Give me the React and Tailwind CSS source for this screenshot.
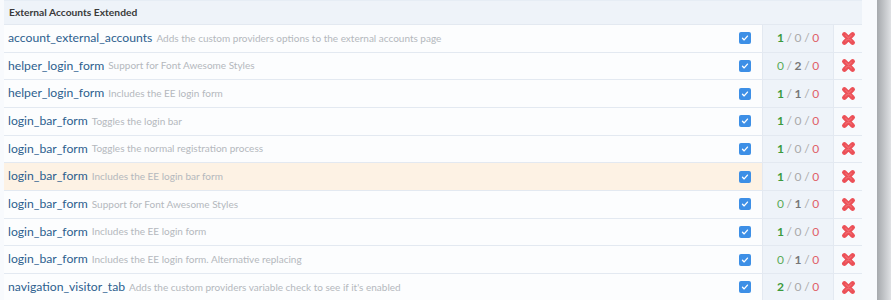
import React from "react";

const rows = [
  { name: "account_external_accounts", desc: "Adds the custom providers options to the external accounts page", c: [1, 0, 0] },
  { name: "helper_login_form", desc: "Support for Font Awesome Styles", c: [0, 2, 0] },
  { name: "helper_login_form", desc: "Includes the EE login form", c: [1, 1, 0] },
  { name: "login_bar_form", desc: "Toggles the login bar", c: [1, 0, 0] },
  { name: "login_bar_form", desc: "Toggles the normal registration process", c: [1, 0, 0] },
  { name: "login_bar_form", desc: "Includes the EE login bar form", c: [1, 0, 0], hl: true },
  { name: "login_bar_form", desc: "Support for Font Awesome Styles", c: [0, 1, 0] },
  { name: "login_bar_form", desc: "Includes the EE login form", c: [1, 0, 0] },
  { name: "login_bar_form", desc: "Includes the EE login form. Alternative replacing", c: [0, 1, 0] },
  { name: "navigation_visitor_tab", desc: "Adds the custom providers variable check to see if it's enabled", c: [2, 0, 0] },
];

function Check() {
  return (
    <span className="flex h-[12px] w-[12px] items-center justify-center rounded-[2px] bg-[#3d8fe6]">
      <svg viewBox="0 0 12 12" className="h-[10px] w-[10px]" fill="none" stroke="white" strokeWidth="1.6" strokeLinecap="round" strokeLinejoin="round">
        <path d="M3 6.3l2 2 4-4.6" />
      </svg>
    </span>
  );
}

function Cross() {
  return (
    <svg viewBox="0 0 16 16" className="h-[15px] w-[15px]">
      <path d="M3.6 3.6L12.4 12.4M12.4 3.6L3.6 12.4" stroke="#ec5057" strokeWidth="5" strokeLinecap="round" />
      <path d="M5 4.6L11 10.6M11 4.6L5 10.6" stroke="#f6878c" strokeWidth="1.4" strokeLinecap="round" opacity="0.45" />
    </svg>
  );
}

function Counts({ c }) {
  return (
    <span className="text-[12px] tracking-[-0.2px] text-[#aaa]">
      <span className={c[0] ? "font-bold text-[#3c9a3c]" : "text-[#5aab5a]"}>{c[0]}</span>
      {" / "}
      <span className={c[1] ? "font-bold text-[#777]" : "text-[#aaa]"}>{c[1]}</span>
      {" / "}
      <span className={c[2] ? "font-bold text-[#d9434a]" : "text-[#e06068]"}>{c[2]}</span>
    </span>
  );
}

export default function App() {
  return (
    <div className="flex h-[300px] w-[891px] overflow-hidden bg-[#f4f7fb] font-['Lato',sans-serif]">
      <div className="flex w-[877px] flex-col bg-[#f8fafd] pr-[15px]">
        <div className="ml-[4px] flex h-[24px] shrink-0 items-center border-t border-[#e6edf5] bg-[#eef3f9] pl-[5px] text-[10.25px] font-bold text-[#3a3a3a]">
          External Accounts Extended
        </div>
        {rows.map((r, i) => (
          <div key={i} className={`ml-[4px] flex h-[27.67px] shrink-0 items-stretch border-t border-[#e3e9f1] ${r.hl ? "bg-[#fdf2e4]" : "bg-[#fcfdfe]"}`}>
            <div className="flex min-w-0 flex-1 items-center gap-[4px] pl-[4px]">
              <span className="text-[12.2px] text-[#2d5f8e]">{r.name}</span>
              <span className="text-[10px] text-[#b4b8bd]">{r.desc}</span>
            </div>
            <div className="flex w-[34px] items-center justify-center">
              <Check />
            </div>
            <div className="flex w-[71px] items-center justify-center border-l border-[#e3e9f1] bg-[#eef3f9]">
              <Counts c={r.c} />
            </div>
            <div className="flex w-[29px] items-center justify-center border-l border-[#e3e9f1] bg-[#f7fafd]">
              <Cross />
            </div>
          </div>
        ))}
      </div>
      <div className="w-[14px] bg-gradient-to-r from-[#a6a9ad] to-[#dfe1e4]" />
    </div>
  );
}
